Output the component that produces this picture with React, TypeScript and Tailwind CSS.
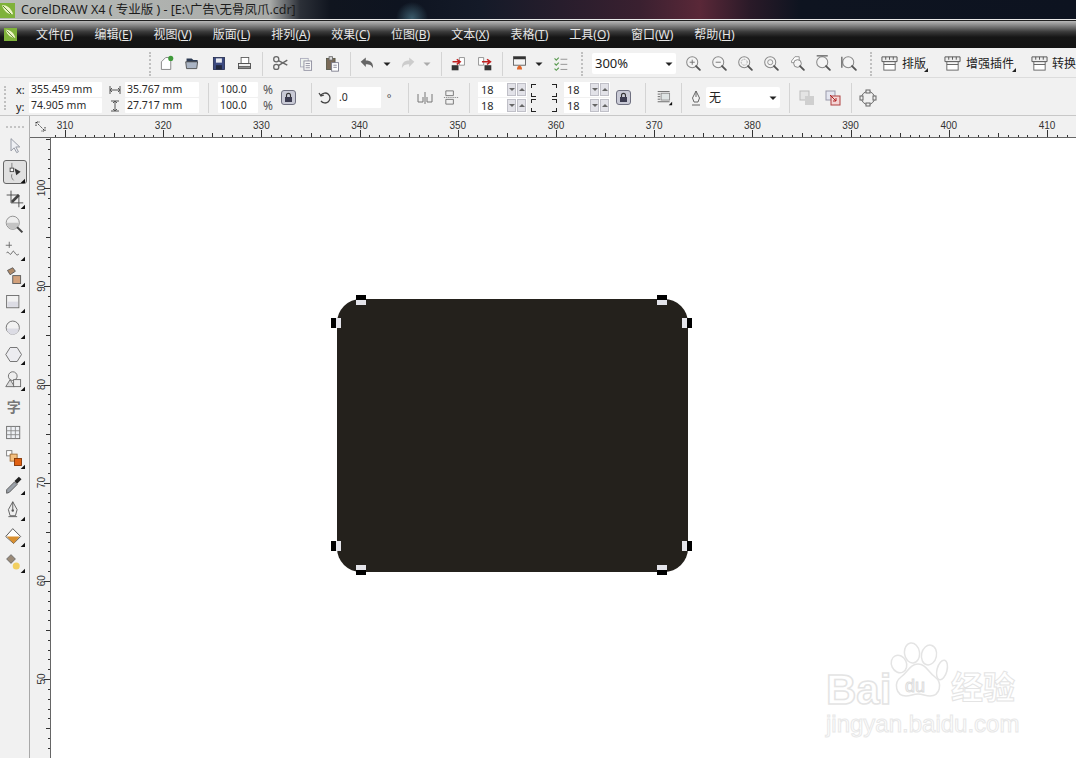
import React from "react";

const cjk = "font-['Noto_Sans','Noto_Sans_CJK_SC',sans-serif]";

const menus = [
  ["文件", "F"], ["编辑", "E"], ["视图", "V"], ["版面", "L"], ["排列", "A"], ["效果", "C"],
  ["位图", "B"], ["文本", "X"], ["表格", "T"], ["工具", "O"], ["窗口", "W"], ["帮助", "H"],
];

const Ico = ({ children, size = 17, box = 20 }: { children: React.ReactNode; size?: number; box?: number }) => (
  <svg width={size} height={size} viewBox={`0 0 ${box} ${box}`} fill="none" className="shrink-0 overflow-visible">
    {children}
  </svg>
);

const Slot = ({ w = 26, children }: { w?: number; children?: React.ReactNode }) => (
  <div className="flex shrink-0 items-center justify-center" style={{ width: w }}>
    {children}
  </div>
);

const Sep = ({ className = "" }: { className?: string }) => (
  <div className={`h-[30px] w-px shrink-0 bg-[#d4d4d4] ${className}`} />
);

const Grip = ({ className = "" }: { className?: string }) => (
  <div className={`h-[24px] w-[2px] shrink-0 border-l-2 border-dotted border-[#c0c0c0] ${className}`} />
);

const Arrow = () => (
  <Ico size={8} box={8}><path d="M0.5 2.5h7L4 6z" fill="#222" /></Ico>
);

const Mag = ({ children }: { children?: React.ReactNode }) => (
  <Ico>
    <circle cx="8.5" cy="8.5" r="6.5" fill="#f4f4f4" stroke="#888" strokeWidth="1.2" />
    {children}
    <path d="M13 13l4.5 4.5" stroke="#555" strokeWidth="2.2" strokeLinecap="round" />
  </Ico>
);

const Lock = () => (
  <div className="flex h-[15px] w-[15px] items-center justify-center rounded-[3px] border border-[#6f7080] bg-[#c9cad6]">
    <Ico size={11} box={11}>
      <path d="M3.5 5V3.4a2 2 0 0 1 4 0V5" stroke="#333" strokeWidth="1.1" />
      <rect x="2" y="5" width="7" height="5" fill="#3c3c50" />
    </Ico>
  </div>
);

const Field = ({ w, children, className = "" }: { w: number; children: React.ReactNode; className?: string }) => (
  <div
    className={`flex h-[15px] shrink-0 items-center whitespace-nowrap rounded-[1px] bg-white pl-[2px] text-[10.5px] leading-none text-[#2a2a2a] ${className}`}
    style={{ width: w }}
  >
    {children}
  </div>
);

const Spin = ({ w, v }: { w: number; v: string }) => (
  <div className="flex h-[15px] shrink-0 items-center justify-between bg-white pl-[3px] pr-[1px] text-[11px] leading-none text-[#2a2a2a]" style={{ width: w }}>
    {v}
    <div className="flex gap-px">
      <div className="flex h-[13px] w-[9px] items-center justify-center border border-[#c0c0c8] bg-[#e2e2e8]">
        <div className="h-0 w-0 border-x-[3px] border-t-[3px] border-x-transparent border-t-[#666]" />
      </div>
      <div className="flex h-[13px] w-[9px] items-center justify-center border border-[#c0c0c8] bg-[#e2e2e8]">
        <div className="h-0 w-0 border-x-[3px] border-b-[3px] border-x-transparent border-b-[#666]" />
      </div>
    </div>
  </div>
);

const Bracket = ({ right = false }: { right?: boolean }) => {
  const top = right ? "border-r border-t" : "border-l border-t";
  const bottom = right ? "border-r border-b" : "border-l border-b";
  return (
    <div className="flex h-[28px] w-[5px] flex-col justify-between">
      <div className="flex flex-col gap-[5px]">
        <div className={`h-[4px] w-[5px] border-[#222] ${top}`} />
        <div className={`h-[4px] w-[5px] border-[#222] ${bottom}`} />
      </div>
      <div className="flex flex-col gap-[5px]">
        <div className={`h-[4px] w-[5px] border-[#222] ${top}`} />
        <div className={`h-[4px] w-[5px] border-[#222] ${bottom}`} />
      </div>
    </div>
  );
};

const Awning = () => (
  <Ico size={17} box={18}>
    <rect x="3" y="7" width="12" height="9" fill="#fff" stroke="#666" />
    <path d="M1 2h16v5H1z" fill="#eee" stroke="#555" />
    <path d="M5 2v3M9 2v3M13 2v3M3 10h12" stroke="#555" />
  </Ico>
);

const Tick = () => (
  <div className="absolute bottom-0 right-0 h-0 w-0 border-b-[4px] border-l-[4px] border-b-[#222] border-l-transparent" />
);

const Logo = ({ size }: { size: number }) => (
  <svg width={size} height={size} viewBox="0 0 16 16" className="shrink-0">
    <rect width="16" height="16" fill="#7fb23a" />
    <path d="M2 2c5 0 10 3 12 10-5 0-10-3-12-10z" fill="#eef4c8" />
    <path d="M3 3l9 9" stroke="#4e7f20" />
  </svg>
);

const Corner = () => <path d="M24 19v5h-5z" fill="#111" />;

const toolbox: React.ReactNode[] = [
  <path key="a" d="M8 3v14l3.5-3.5 3 5.5 2-1-3-5.5H18z" fill="#eef0f4" stroke="#8a8f9a" />,
  <g key="b">
    <path d="M9 1v7M9 14c-1 3 0 5 2 7" stroke="#777" />
    <rect x="7" y="7" width="4" height="4" fill="#fff" stroke="#444" />
    <path d="M12 7l7 4-5 4z" fill="#333" />
    <Corner />
  </g>,
  <g key="c">
    <path d="M8 3v14h14M3 8h14v14" stroke="#444" />
    <path d="M9 16l8-8" stroke="#444" strokeWidth="3" />
    <Corner />
  </g>,
  <g key="d">
    <circle cx="10" cy="10" r="7.5" fill="#eee" stroke="#888" />
    <path d="M3 10a7 7 0 0 0 14 0z" fill="#c4c4c4" />
    <path d="M15 15l6 6" stroke="#444" strokeWidth="2.4" />
  </g>,
  <g key="e">
    <path d="M6 2v7M2 6h7" stroke="#666" />
    <path d="M3 15c2-4 3 3 5 1s2-5 4-2 3 4 5 2" stroke="#555" />
    <Corner />
  </g>,
  <g key="f">
    <path d="M4 5l6-3 3 4-6 4z" fill="#b08a68" stroke="#555" />
    <rect x="10" y="11" width="9" height="9" fill="#d2a07a" stroke="#555" />
    <Corner />
  </g>,
  <g key="g">
    <rect x="3" y="4" width="14" height="14" fill="#f2f2f2" stroke="#666" />
    <rect x="4" y="11" width="12" height="6" fill="#dcdce4" />
    <Corner />
  </g>,
  <g key="h">
    <circle cx="10" cy="11" r="7.5" fill="#f2f2f2" stroke="#666" />
    <path d="M3 12a7 7 0 0 0 14 0z" fill="#dcdce4" />
    <Corner />
  </g>,
  <g key="i">
    <path d="M7 4h8l5 8-5 8H7l-5-8z" fill="#ececf0" stroke="#666" />
    <Corner />
  </g>,
  <g key="j">
    <circle cx="10" cy="7" r="5" fill="#eee" stroke="#666" />
    <path d="M2 19l5-8 5 8z" fill="#ddd" stroke="#666" />
    <rect x="11" y="11" width="8" height="8" fill="#eee" stroke="#666" />
    <Corner />
  </g>,
  <text key="k" x="3" y="18" fontSize="16" fontWeight="700" fill="#777" fontFamily="'Noto Sans CJK SC',sans-serif">字</text>,
  <g key="l">
    <rect x="3" y="5" width="15" height="14" fill="#eef0f4" stroke="#666" />
    <path d="M3 10h15M3 14.5h15M8 5v14M13 5v14" stroke="#888" />
  </g>,
  <g key="m">
    <rect x="3" y="3" width="6" height="6" fill="#fff" stroke="#777" />
    <rect x="7" y="7" width="8" height="8" fill="#f4c080" stroke="#a06a30" />
    <rect x="12" y="12" width="8" height="8" fill="#e06010" stroke="#803000" />
    <Corner />
  </g>,
  <g key="n">
    <path d="M4 20l9-9 3 3-9 9-3 1z" fill="#9aa0a8" stroke="#555" transform="translate(-1 -2)" />
    <path d="M12 8l5-5 3 3-5 5z" fill="#222" />
    <Corner />
  </g>,
  <g key="o">
    <path d="M10 2l5 9-2 7H7l-2-7z" fill="#eee" stroke="#555" />
    <path d="M10 2v9M5 19h10" stroke="#555" />
    <circle cx="10" cy="12" r="1.4" fill="#555" />
    <Corner />
  </g>,
  <g key="p">
    <path d="M2 12l8-9 9 9-8 8z" fill="#fff" stroke="#444" />
    <path d="M3 12h15l-7 8z" fill="#d99030" />
    <Corner />
  </g>,
  <g key="q">
    <path d="M3 8l5-5 5 5-5 5z" fill="#9a8a78" stroke="#666" />
    <circle cx="14" cy="16" r="4" fill="#f2cf60" />
    <Corner />
  </g>,
];

const hLabels = [310, 320, 330, 340, 350, 360, 370, 380, 390, 400, 410];
const vLabels = [100, 90, 80, 70, 60, 50];

const HRuler = () => (
  <svg width="1025" height="22" className="shrink-0">
    {Array.from({ length: 104 }, (_, i) => {
      const x = 14 - 9.82 + i * 9.82;
      const n = i - 1;
      const h = n % 10 === 0 ? 7 : n % 5 === 0 ? 4 : 2;
      return <rect key={i} x={Math.round(x)} y={21 - h} width="1" height={h} fill="#333" />;
    })}
    {hLabels.map((v, i) => (
      <text key={v} x={14 + i * 98.2} y="13" textAnchor="middle" fontSize="10" fill="#333" fontFamily="'Liberation Sans',sans-serif">
        {v}
      </text>
    ))}
    <rect x="0" y="21" width="1025" height="1" fill="#666" />
  </svg>
);

const VRuler = () => (
  <svg width="21" height="620" className="shrink-0">
    {Array.from({ length: 64 }, (_, i) => {
      const y = 1 + i * 9.82;
      const n = i - 5;
      const w = n % 10 === 0 ? 6 : n % 5 === 0 ? 4 : 2;
      return <rect key={i} x={20 - w} y={Math.round(y)} width={w} height="1" fill="#333" />;
    })}
    {vLabels.map((v, i) => (
      <text
        key={v}
        transform={`translate(15 ${50 + i * 98.2}) rotate(-90)`}
        textAnchor="middle"
        fontSize="10"
        fill="#333"
        fontFamily="'Liberation Sans',sans-serif"
      >
        {v}
      </text>
    ))}
    <rect x="20" y="0" width="1" height="620" fill="#666" />
  </svg>
);

// handles of the selected shape, in canvas coordinates: [x, y, which side is black]
const handles: [number, number, string][] = [
  [305, 157, "t"], [606, 157, "t"], [280, 180, "l"], [631, 180, "r"],
  [280, 403, "l"], [631, 403, "r"], [305, 427, "b"], [606, 427, "b"],
];

const handleClass: Record<string, string> = {
  t: "bg-[linear-gradient(180deg,#000_50%,#e4e4ea_50%)]",
  b: "bg-[linear-gradient(180deg,#e4e4ea_50%,#000_50%)]",
  l: "bg-[linear-gradient(90deg,#000_50%,#e4e4ea_50%)]",
  r: "bg-[linear-gradient(90deg,#e4e4ea_50%,#000_50%)]",
};

export default function App() {
  return (
    <div className={`h-[758px] w-[1076px] overflow-hidden bg-[#f1f1f1] ${cjk}`}>
      {/* title bar */}
      <div className="flex h-[19px] items-center pt-[2px] bg-[radial-gradient(circle_at_412px_18px,#3a5a6a_0,transparent_16px),linear-gradient(90deg,#b9bdb9_0,#a8aaa8_270px,#2c3038_300px,#10151f_330px,#0e1420_400px,#141a28_480px,#3a2030_640px,#5a2838_700px,#2a1a28_750px,#0e1420_800px,#0d1320_1076px)]">
        <Logo size={15} />
        <span className="ml-[6px] whitespace-nowrap text-[12.5px] leading-none text-[#1c1c1c]">
          CorelDRAW X4 ( 专业版 ) - [E:\广告\无骨凤爪.cdr]
        </span>
      </div>
      <div className="h-px bg-[#e8e8e8]" />
      <div className="h-px bg-[#202020]" />

      {/* menu bar */}
      <div className="flex h-[27px] items-center bg-[linear-gradient(180deg,#b8b8b8_0,#8a8a8a_15%,#3a3a3a_40%,#161616_60%,#141414_100%)]">
        <div className="ml-[4px] flex">
          <Logo size={13} />
        </div>
        <div className="ml-[19px] flex gap-[21px]">
          {menus.map(([t, k]) => (
            <span key={k} className="whitespace-nowrap text-[12px] leading-none text-[#e6e6e6]">
              {t}(<span className="underline">{k}</span>)
            </span>
          ))}
        </div>
      </div>

      {/* standard toolbar */}
      <div className="flex h-[30px] items-center border-b border-[#dcdcdc] pl-[149px] pt-[2px]">
        <Grip />
        <div className="ml-[2px] flex">
          <Slot>
            <Ico>
              <path d="M4 8l5-5h6v14H4z" fill="#fff" stroke="#777" />
              <circle cx="15" cy="4" r="3" fill="#3f9a3a" />
            </Ico>
          </Slot>
          <Slot>
            <Ico>
              <path d="M3 4h6l2 2h5v3H3z" fill="#2c3a52" />
              <path d="M2 8h14l-1 8H3z" fill="#aab4c4" stroke="#444" />
            </Ico>
          </Slot>
          <Slot>
            <Ico>
              <rect x="4" y="3" width="13" height="14" fill="#3c4a80" stroke="#252d50" />
              <rect x="7" y="4" width="7" height="5" fill="#e8eaf0" />
              <rect x="7" y="12" width="7" height="5" fill="#20263c" />
            </Ico>
          </Slot>
          <Slot>
            <Ico>
              <rect x="6" y="3" width="9" height="7" fill="#fff" stroke="#555" />
              <rect x="3" y="10" width="14" height="6" fill="#eee" stroke="#444" />
              <path d="M3 14h14" stroke="#444" strokeWidth="1.6" />
            </Ico>
          </Slot>
        </div>
        <Sep className="ml-[5px] !h-[24px]" />
        <div className="ml-[4px] flex">
          <Slot>
            <Ico>
              <circle cx="5" cy="5" r="3" stroke="#666" strokeWidth="1.5" />
              <circle cx="5" cy="14" r="3" stroke="#666" strokeWidth="1.5" />
              <path d="M7.5 6.5L18 12M7.5 12.5L18 6" stroke="#666" strokeWidth="1.6" />
            </Ico>
          </Slot>
          <Slot>
            <Ico>
              <rect x="3" y="4" width="9" height="10" fill="#eef2ee" stroke="#aab" />
              <rect x="7" y="7" width="9" height="11" fill="#f6f6f6" stroke="#889" />
              <path d="M9 10h5M9 12.5h5M9 15h5" stroke="#889" />
            </Ico>
          </Slot>
          <Slot>
            <Ico>
              <rect x="3" y="4" width="10" height="13" fill="#7a6a58" stroke="#554" />
              <rect x="6" y="2" width="4" height="4" fill="#ddd" stroke="#666" />
              <rect x="9" y="9" width="8" height="10" fill="#fff" stroke="#778" />
              <path d="M11 12h4M11 14.5h4" stroke="#778" />
            </Ico>
          </Slot>
        </div>
        <Sep className="ml-[5px] !h-[24px]" />
        <div className="ml-[3px] flex">
          <Slot>
            <Ico>
              <path d="M2 8l6-5v3.5c6 0 9 3 8.5 9.500-1.500-4-4-5-8.500-5V14z" fill="#666" />
            </Ico>
          </Slot>
          <Slot w={14}>
            <Arrow />
          </Slot>
          <Slot>
            <Ico>
              <path d="M18 8l-6-5v3.500c-6 0-9 3-8.500 9.500 1.500-4 4-5 8.500-5V14z" fill="#ccc" />
            </Ico>
          </Slot>
          <Slot w={14}>
            <Ico size={8} box={8}><path d="M0.5 2.5h7L4 6z" fill="#aaa" /></Ico>
          </Slot>
        </div>
        <Sep className="ml-[7px] !h-[24px]" />
        <div className="ml-[3px] flex">
          <Slot>
            <Ico>
              <path d="M11 3h6v9h-6z" fill="#fff" stroke="#888" />
              <path d="M3 8h8M8 5l4 3-4 3" stroke="#c02020" strokeWidth="1.800" />
              <rect x="2" y="12" width="8" height="6" fill="#333" />
            </Ico>
          </Slot>
          <Slot>
            <Ico>
              <path d="M3 3h6v9H3z" fill="#fff" stroke="#888" />
              <path d="M7 8h9M13 5l4 3-4 3" stroke="#c02020" strokeWidth="1.800" />
              <rect x="10" y="12" width="8" height="6" fill="#333" />
            </Ico>
          </Slot>
        </div>
        <Sep className="ml-[5px] !h-[24px]" />
        <div className="ml-[3px] flex">
          <Slot>
            <Ico>
              <rect x="3" y="2" width="14" height="10" fill="#f4f4f4" stroke="#555" />
              <rect x="3" y="2" width="14" height="3" fill="#333" />
              <path d="M7 17c0-3 1-4 3-5 2 1 3 2 3 5z" fill="#e0662a" />
            </Ico>
          </Slot>
          <Slot w={14}>
            <Arrow />
          </Slot>
        </div>
        <div className="ml-px">
          <Slot>
            <Ico>
              <path d="M3 4l2 2 3-3M3 10l2 2 3-3M3 16l2 2 3-3" stroke="#5a9a50" strokeWidth="1.300" />
              <path d="M10 5h8M10 11h8M10 17h8" stroke="#888" />
            </Ico>
          </Slot>
        </div>
        <Grip className="ml-[8px]" />
        <div className="ml-[9px] flex h-[21px] w-[84px] shrink-0 items-center justify-between rounded-[2px] bg-white pl-[3px] pr-[3px] text-[13px] leading-none text-[#222]">
          300%
          <Arrow />
        </div>
        <div className="ml-[4px] flex">
          <Slot><Mag><path d="M5.500 8.500h6M8.500 5.500v6" stroke="#666" /></Mag></Slot>
          <Slot><Mag><path d="M5.500 8.500h6" stroke="#666" /></Mag></Slot>
          <Slot><Mag><circle cx="8.500" cy="8.500" r="3.500" stroke="#888" strokeDasharray="1 1" /></Mag></Slot>
          <Slot><Mag><circle cx="8.500" cy="8.500" r="3" stroke="#888" /></Mag></Slot>
          <Slot>
            <Ico>
              <path d="M3 7l4-5h5v7H3z" fill="#fff" stroke="#888" />
              <circle cx="10" cy="10" r="4.500" fill="#f4f4f4" stroke="#777" />
              <path d="M13 13l4.500 4.500" stroke="#555" strokeWidth="2.200" strokeLinecap="round" />
            </Ico>
          </Slot>
          <Slot><Mag><path d="M2 1h13" stroke="#555" strokeWidth="1.400" /></Mag></Slot>
          <Slot><Mag><path d="M1 2v13" stroke="#555" strokeWidth="1.400" /></Mag></Slot>
        </div>
        <Grip className="ml-[8px]" />
        <div className="relative ml-[4px] flex items-center">
          <Slot><Awning /></Slot>
          <span className="w-[26px] whitespace-nowrap text-[12px] leading-none text-[#222]">排版</span>
          <Tick />
        </div>
        <div className="relative ml-[11px] flex items-center">
          <Slot><Awning /></Slot>
          <span className="ml-px w-[50px] whitespace-nowrap text-[12px] leading-none text-[#222]">增强插件</span>
          <Tick />
        </div>
        <div className="ml-[10px] flex items-center">
          <Slot><Awning /></Slot>
          <span className="whitespace-nowrap text-[12px] leading-none text-[#222]">转换</span>
        </div>
      </div>

      {/* property bar */}
      <div className="flex h-[38px] items-center border-b border-[#c8c8c8] pl-[4px] pt-[2px]">
        <Grip />
        <div className="ml-[10px] flex w-[13px] shrink-0 flex-col gap-[2px] text-[11px] leading-[15px] text-[#222]">
          <span className="h-[15px]">x:</span>
          <span className="h-[15px]">y:</span>
        </div>
        <div className="flex flex-col gap-px">
          <Field w={73}>355.459 mm</Field>
          <Field w={73}>74.905 mm</Field>
        </div>
        <div className="flex w-[23px] shrink-0 flex-col items-center gap-[4px] pl-[3px]">
          <Ico size={12} box={12}><path d="M1 2v8M11 2v8M1 6h10M3 4L1 6l2 2M9 4l2 2-2 2" stroke="#555" /></Ico>
          <Ico size={12} box={12}><path d="M2 1h8M2 11h8M6 1v10M4 3l2-2 2 2M4 9l2 2 2-2" stroke="#555" /></Ico>
        </div>
        <div className="flex flex-col gap-px">
          <Field w={74}>35.767 mm</Field>
          <Field w={74}>27.717 mm</Field>
        </div>
        <Sep className="ml-[9px]" />
        <div className="ml-[9px] flex flex-col gap-px">
          <Field w={40}>100.0</Field>
          <Field w={40}>100.0</Field>
        </div>
        <div className="flex w-[20px] shrink-0 flex-col items-center gap-px text-[12px] leading-[15px] text-[#555]">
          <span>%</span>
          <span>%</span>
        </div>
        <Slot w={20}><Lock /></Slot>
        <Sep className="ml-[13px]" />
        <Slot w={25}>
          <Ico size={14} box={14}><path d="M3 4a5 5 0 1 1 0 6M1 2l2 3 3-1" stroke="#444" strokeWidth="1.300" /></Ico>
        </Slot>
        <Field w={44} className="!h-[21px]">.0</Field>
        <Slot w={16}><span className="text-[11px] leading-none text-[#555]">°</span></Slot>
        <Sep className="ml-[11px]" />
        <div className="ml-[3px] flex">
          <Slot>
            <Ico size={16} box={16}>
              <path d="M1 4v8h5V7M15 4v8h-5V7M8 2v12" stroke="#777" />
            </Ico>
          </Slot>
          <Slot>
            <Ico size={17} box={18}>
              <path d="M3 2h8v5H3zM3 11h8v5H3z" stroke="#777" />
              <path d="M1 9h16" stroke="#777" strokeDasharray="1 1" />
            </Ico>
          </Slot>
        </div>
        <Sep className="ml-[5px]" />
        <div className="ml-[8px] flex flex-col gap-px">
          <Spin w={49} v="18" />
          <Spin w={49} v="18" />
        </div>
        <div className="flex w-[37px] shrink-0 justify-between pl-[4px] pr-[7px]">
          <Bracket />
          <Bracket right />
        </div>
        <div className="flex flex-col gap-px">
          <Spin w={46} v="18" />
          <Spin w={46} v="18" />
        </div>
        <div className="ml-[3px]"><Slot w={20}><Lock /></Slot></div>
        <Sep className="ml-[12px]" />
        <div className="ml-[6px]">
          <Slot w={24}>
            <Ico>
              <path d="M2 3h14M2 6h3M2 9h3M2 12h3M2 15h14" stroke="#555" />
              <rect x="6" y="5" width="10" height="8" fill="#dfe4e4" stroke="#888" />
              <path d="M19 15v4h-4z" fill="#111" />
            </Ico>
          </Slot>
        </div>
        <Sep className="ml-[5px]" />
        <div className="ml-[4px]">
          <Slot w={20}>
            <Ico size={16} box={16}>
              <path d="M8 1l3.500 7-1.500 4H6L4.500 8z" fill="#f4f4f4" stroke="#666" />
              <path d="M8 1v6M4 15h8" stroke="#666" />
            </Ico>
          </Slot>
        </div>
        <div className="flex h-[21px] w-[74px] shrink-0 items-center justify-between rounded-[2px] bg-white pl-[3px] pr-[3px] text-[12px] leading-none text-[#222]">
          无
          <Arrow />
        </div>
        <Sep className="ml-[9px]" />
        <div className="ml-[4px] flex">
          <Slot>
            <Ico size={16} box={16}>
              <rect x="1" y="1" width="9" height="9" fill="#e4e4e4" stroke="#bbb" />
              <rect x="6" y="6" width="9" height="9" fill="#cfcfcf" />
            </Ico>
          </Slot>
          <Slot>
            <Ico size={16} box={16}>
              <rect x="1" y="1" width="9" height="9" fill="#e4e6f0" stroke="#99a" />
              <rect x="6" y="6" width="9" height="9" fill="#f4d4d4" stroke="#b04040" />
              <path d="M5 5l6 6M11 8v3H8" stroke="#b02020" />
            </Ico>
          </Slot>
        </div>
        <Sep className="ml-[5px]" />
        <div className="ml-[3px]">
          <Slot>
            <Ico size={16} box={16}>
              <circle cx="8" cy="8" r="6.500" stroke="#666" />
              <rect x="6" y="0" width="4" height="3" fill="#eee" stroke="#666" />
              <rect x="6" y="13" width="4" height="3" fill="#eee" stroke="#666" />
              <rect x="0" y="6" width="3" height="4" fill="#eee" stroke="#666" />
              <rect x="13" y="6" width="3" height="4" fill="#eee" stroke="#666" />
            </Ico>
          </Slot>
        </div>
      </div>

      {/* ruler row */}
      <div className="flex h-[22px]">
        <div className="flex h-full w-[30px] shrink-0 items-center justify-center border-r border-[#b0b0b0]">
          <div className="w-[18px] border-t-2 border-dotted border-[#c4c4c4]" />
        </div>
        <div className="flex w-[21px] shrink-0 items-center justify-center border-b border-[#666]">
          <Ico size={11} box={11}>
            <path d="M1 1l9 9M1 5V1h4M10 6v4H6" stroke="#333" strokeDasharray="1.500 1" />
          </Ico>
        </div>
        <HRuler />
      </div>

      {/* workspace */}
      <div className="flex h-[620px]">
        <div className="flex w-[30px] shrink-0 flex-col items-center border-r border-[#a8a8a8]">
          {toolbox.map((icon, i) => (
            <div key={i} className="relative mb-[10px] flex h-[16px] w-full items-center justify-center">
              {i === 1 && (
                <div className="absolute left-[3px] top-[-4px] h-[24px] w-[24px] rounded-[3px] border border-[#666] bg-[#e0e0e0]" />
              )}
              <div className="relative flex">
                <Ico size={21} box={24}>{icon}</Ico>
              </div>
            </div>
          ))}
        </div>
        <VRuler />
        <div className="relative flex-1 overflow-hidden bg-white">
          {/* selected rounded rectangle */}
          <div className="absolute left-[286px] top-[161px] h-[273px] w-[351px] rounded-[24px] bg-[#24211c]" />
          {handles.map(([x, y, side], i) => (
            <div
              key={i}
              className={`absolute h-[10px] w-[10px] ${handleClass[side]}`}
              style={{ left: x, top: y }}
            />
          ))}

          {/* watermark */}
          <div className="absolute left-[775px] top-[504px] h-[100px] w-[200px] text-white">
            <span className="absolute left-0 top-[27px] font-['Liberation_Sans',sans-serif] text-[42px] font-bold leading-none [-webkit-text-stroke:1.500px_#e4e4e4]">
              Bai
            </span>
            <svg width="90" height="60" viewBox="0 0 90 60" className="absolute left-[50px] top-0" fill="#fff" stroke="#e4e4e4" strokeWidth="1.500">
              <ellipse cx="23" cy="22" rx="7.500" ry="9" transform="rotate(-25 23 22)" />
              <ellipse cx="36" cy="11" rx="7.500" ry="10" transform="rotate(-8 36 11)" />
              <ellipse cx="53" cy="13" rx="7.500" ry="10" transform="rotate(12 53 13)" />
              <ellipse cx="66" cy="28" rx="5" ry="10" transform="rotate(15 66 28)" />
              <path d="M42 22c8 0 10 8 17 13 8 6 5 19-5 19-5 0-7-2-12-2s-7 2-12 2c-10 0-13-13-5-19 7-5 9-13 17-13z" />
            </svg>
            <span className="absolute left-[79px] top-[35px] font-['Liberation_Sans',sans-serif] text-[18px] leading-none [-webkit-text-stroke:1px_#dcdcdc]">
              du
            </span>
            <span className="absolute left-[125px] top-[27px] font-['Noto_Sans_CJK_SC',sans-serif] text-[32px] font-bold leading-none [-webkit-text-stroke:1px_#e4e4e4]">
              经验
            </span>
            <span className="absolute left-0 top-[70px] whitespace-nowrap font-['Liberation_Sans',sans-serif] text-[24px] leading-none [-webkit-text-stroke:1px_#e8e8e8]">
              jingyan.baidu.com
            </span>
          </div>
        </div>
      </div>
    </div>
  );
}
